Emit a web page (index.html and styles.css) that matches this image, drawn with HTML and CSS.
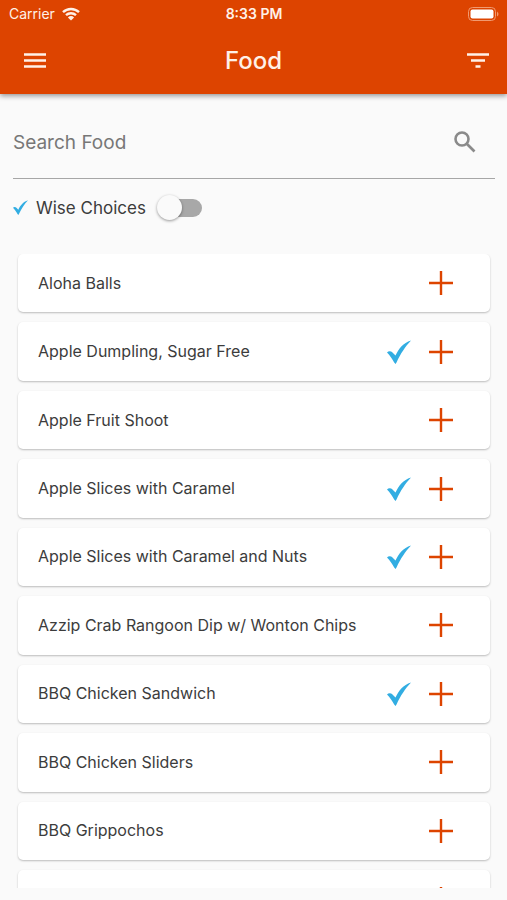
FILE: index.html
```html
<!DOCTYPE html>
<html lang="en">
  <head>
    <meta charset="UTF-8" />
    <meta name="viewport" content="width=device-width, initial-scale=1.0" />
    <title>Food</title>
    <link rel="stylesheet" href="styles.css">
  </head>
  <body>
    <!-- Shared icons -->
    <svg class="sprite" aria-hidden="true">
      <symbol id="check" viewBox="0 0 24 24">
        <path d="M0 12.500 C1.500 10.800 4 11 5.500 12.500 L8.500 15.500 C12 8.500 16 3 24 0.500 C18 7 14 13 9.500 22.500 L8.500 24 L7.200 22.500 C5 18.500 3 15.500 0 12.500 Z" />
      </symbol>
      <symbol id="plus" viewBox="0 0 26 26">
        <path d="M13 1v24M1 13h24" />
      </symbol>
    </svg>

    <header class="app-bar">
      <div class="status-bar">
        <div class="carrier">
          <span>Carrier</span>
          <svg class="wifi" viewBox="0 0 18 14">
            <path d="M1 5.200a11.500 11.500 0 0 1 16 0M4 8.200a7.300 7.300 0 0 1 10 0" />
            <path class="wifi-dot" d="M9 13.500L5.900 10.400a4.500 4.500 0 0 1 6.200 0z" />
          </svg>
        </div>
        <span class="time">8:33 PM</span>
        <svg class="battery" viewBox="0 0 31 14">
          <rect class="battery-case" x="0.500" y="0.500" width="27" height="13" rx="4" />
          <rect class="battery-fill" x="2.500" y="2.500" width="23" height="9" rx="2" />
          <path class="battery-tip" d="M29 4.500q1.500 1 1.500 2.500t-1.500 2.500z" />
        </svg>
      </div>
      <div class="toolbar">
        <button class="icon-btn" aria-label="Menu">
          <svg width="24" height="18" viewBox="0 0 24 18">
            <path d="M1 2.500h22M1 8.500h22M1 14.500h22" />
          </svg>
        </button>
        <h1>Food</h1>
        <button class="icon-btn" aria-label="Filter">
          <svg width="24" height="18" viewBox="0 0 24 18">
            <path d="M1 2.500h22M5 8.500h14M9.500 14.500h5" />
          </svg>
        </button>
      </div>
    </header>

    <main class="content">
      <div class="search">
        <input type="search" class="search-input" placeholder="Search Food" aria-label="Search Food" />
        <button class="search-btn" aria-label="Search">
          <svg width="22" height="22" viewBox="0 0 22 22">
            <circle cx="8" cy="8" r="6.500" />
            <path d="M12.500 12.500l8 8" />
          </svg>
        </button>
      </div>

      <label class="wise">
        <svg class="wise-check"><use href="#check" /></svg>
        <span>Wise Choices</span>
        <input type="checkbox" class="switch" />
      </label>

      <ul class="food-list">
        <li class="card">
          <span class="name">Aloha Balls</span>
          <button class="add" aria-label="Add"><svg><use href="#plus" /></svg></button>
        </li>
        <li class="card">
          <span class="name">Apple Dumpling, Sugar Free</span>
          <svg class="check"><use href="#check" /></svg>
          <button class="add" aria-label="Add"><svg><use href="#plus" /></svg></button>
        </li>
        <li class="card">
          <span class="name">Apple Fruit Shoot</span>
          <button class="add" aria-label="Add"><svg><use href="#plus" /></svg></button>
        </li>
        <li class="card">
          <span class="name">Apple Slices with Caramel</span>
          <svg class="check"><use href="#check" /></svg>
          <button class="add" aria-label="Add"><svg><use href="#plus" /></svg></button>
        </li>
        <li class="card">
          <span class="name">Apple Slices with Caramel and Nuts</span>
          <svg class="check"><use href="#check" /></svg>
          <button class="add" aria-label="Add"><svg><use href="#plus" /></svg></button>
        </li>
        <li class="card">
          <span class="name">Azzip Crab Rangoon Dip w/ Wonton Chips</span>
          <button class="add" aria-label="Add"><svg><use href="#plus" /></svg></button>
        </li>
        <li class="card">
          <span class="name">BBQ Chicken Sandwich</span>
          <svg class="check"><use href="#check" /></svg>
          <button class="add" aria-label="Add"><svg><use href="#plus" /></svg></button>
        </li>
        <li class="card">
          <span class="name">BBQ Chicken Sliders</span>
          <button class="add" aria-label="Add"><svg><use href="#plus" /></svg></button>
        </li>
        <li class="card">
          <span class="name">BBQ Grippochos</span>
          <button class="add" aria-label="Add"><svg><use href="#plus" /></svg></button>
        </li>
        <li class="card">
          <span class="name"></span>
          <button class="add" aria-label="Add"><svg><use href="#plus" /></svg></button>
        </li>
      </ul>
    </main>
  </body>
</html>
```

FILE: styles.css
```css
:root {
  --primary: #dd4400;
  --page: #fafafa;
  --text: #3c3c3c;
  --muted: #777;
  --check: #32ade2;
}

* {
  box-sizing: border-box;
}

body {
  margin: 0;
  height: 100vh;
  display: flex;
  flex-direction: column;
  font-family: Inter, sans-serif;
  font-size: 16px;
  color: var(--text);
  background: var(--page);
}

button {
  display: flex;
  padding: 0;
  border: none;
  background: none;
  cursor: pointer;
}

.sprite {
  display: none;
}

/* App bar */
.app-bar {
  background: var(--primary);
  color: #fff1e8;
  box-shadow: 0 2px 5px rgba(0, 0, 0, 0.4);
}

.status-bar {
  display: grid;
  grid-template-columns: 1fr auto 1fr;
  align-items: center;
  height: 27px;
  padding: 0 8px 0 9px;
  font-size: 14px;
}

.carrier {
  display: flex;
  align-items: center;
  gap: 7px;
}

.wifi {
  width: 18px;
  height: 14px;
  fill: none;
  stroke: currentColor;
  stroke-width: 2.4;
}

.wifi-dot {
  fill: currentColor;
  stroke: none;
}

.time {
  font-weight: 600;
}

.battery {
  width: 31px;
  height: 14px;
  justify-self: end;
}

.battery-case {
  fill: none;
  stroke: #f09a70;
}

.battery-fill {
  fill: #fff;
}

.battery-tip {
  fill: #f09a70;
}

.toolbar {
  display: grid;
  grid-template-columns: 1fr auto 1fr;
  align-items: center;
  height: 67px;
  padding: 0 17px;
}

.toolbar h1 {
  margin: 0;
  font-size: 24px;
  font-weight: 500;
}

.icon-btn {
  padding-left: 6px;
  color: #fff1e8;
}

.icon-btn:last-child {
  justify-self: end;
}

.icon-btn svg {
  fill: none;
  stroke: currentColor;
  stroke-width: 2.6;
}

/* Content */
.content {
  flex: 1;
  min-height: 0;
  display: flex;
  flex-direction: column;
  padding-bottom: 12px;
}

.search {
  display: flex;
  align-items: center;
  margin: 12px 12px 0 13px;
  padding-right: 19px;
  height: 73px;
  border-bottom: 1px solid #a6a6a6;
}

.search-input {
  flex: 1;
  min-width: 0;
  padding: 0;
  border: none;
  outline: none;
  background: none;
  font: inherit;
  font-size: 19px;
  color: var(--text);
}

.search-input::placeholder {
  color: var(--muted);
  opacity: 1;
}

.search-btn svg {
  fill: none;
  stroke: #8a8a8a;
  stroke-width: 2.6;
}

.wise {
  display: flex;
  align-items: center;
  align-self: flex-start;
  gap: 8px;
  height: 57px;
  padding-left: 13px;
  font-size: 17px;
}

.wise-check {
  width: 15px;
  height: 15px;
  fill: var(--check);
}

.switch {
  appearance: none;
  display: flex;
  align-items: center;
  width: 42px;
  height: 18px;
  margin: 0 0 0 6px;
  border-radius: 9px;
  background: #a8a8a8;
  cursor: pointer;
}

.switch::before {
  content: "";
  width: 25px;
  height: 25px;
  margin-left: -3px;
  flex-shrink: 0;
  border-radius: 50%;
  background: var(--page);
  box-shadow: 0 1px 3px rgba(0, 0, 0, 0.4);
}

.switch:checked {
  justify-content: flex-end;
  background: var(--check);
}

/* Nine full cards fit, the next one peeks in */
.food-list {
  flex: 1;
  min-height: 0;
  display: grid;
  grid-auto-rows: calc((100% - 108px) / 9);
  gap: 10px;
  margin: 0;
  margin-top: 18px;
  padding: 0 17px 0 18px;
  list-style: none;
  overflow-y: auto;
  scrollbar-width: none;
}

.card {
  display: flex;
  align-items: center;
  padding: 0 36px 0 20px;
  border-radius: 5px;
  background: #fff;
  box-shadow: 0 1px 2px rgba(0, 0, 0, 0.25);
}

.name {
  flex: 1;
  padding-bottom: 1px;
}

.check {
  width: 24px;
  height: 24px;
  margin-right: 17px;
  fill: var(--check);
}

.add svg {
  width: 26px;
  height: 26px;
  fill: none;
  stroke: var(--primary);
  stroke-width: 2.4;
}
```
